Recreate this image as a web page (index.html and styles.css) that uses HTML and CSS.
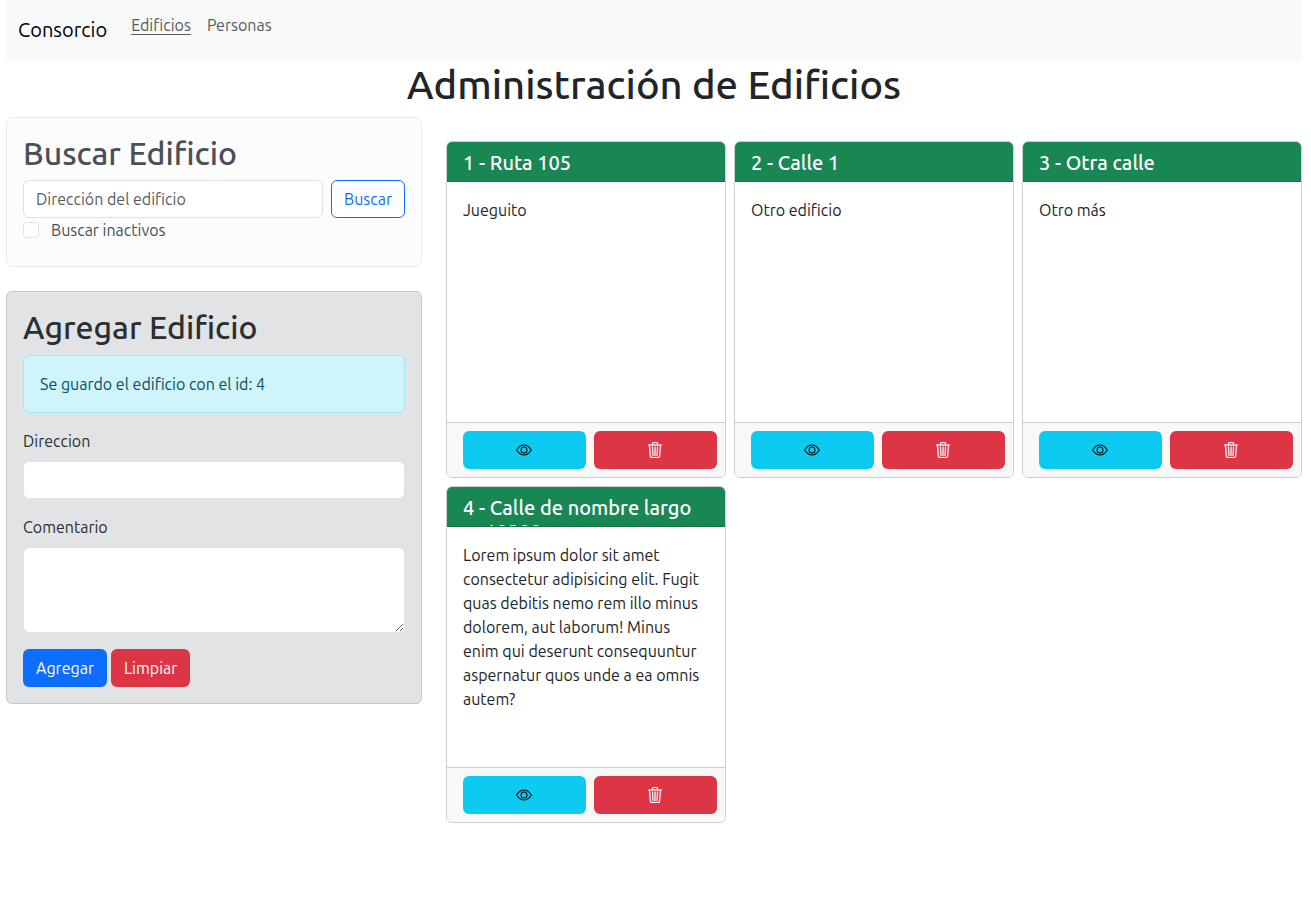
FILE: index.html
```html
<!DOCTYPE html>
<html lang="es">
<head>
<meta charset="utf-8">
<meta name="viewport" content="width=device-width, initial-scale=1">
<title>Consorcio</title>
<link rel="stylesheet" href="styles.css">
</head>
<body>
<svg class="sprite" aria-hidden="true">
  <symbol id="eye" viewBox="0 0 16 16">
    <path d="M16 8s-3-5.500-8-5.500S0 8 0 8s3 5.500 8 5.500S16 8 16 8M1.173 8a13 13 0 0 1 1.660-2.043C4.120 4.668 5.880 3.500 8 3.500s3.879 1.168 5.168 2.457A13 13 0 0 1 14.828 8q-.086.130-.195.288c-.335.480-.830 1.120-1.465 1.755C11.879 11.332 10.119 12.500 8 12.500s-3.879-1.168-5.168-2.457A13 13 0 0 1 1.172 8z"/>
    <path d="M8 5.500a2.500 2.500 0 1 0 0 5 2.500 2.500 0 0 0 0-5M4.500 8a3.500 3.500 0 1 1 7 0 3.500 3.500 0 0 1-7 0"/>
  </symbol>
  <symbol id="trash" viewBox="0 0 16 16">
    <path stroke="currentColor" stroke-width=".25" d="M6.500 1h3a.5.5 0 0 1 .5.5v1H6v-1a.5.5 0 0 1 .5-.5M11 2.500v-1A1.500 1.500 0 0 0 9.500 0h-3A1.500 1.500 0 0 0 5 1.500v1H1.500a.5.5 0 0 0 0 1h.538l.853 10.660A2 2 0 0 0 4.885 16h6.230a2 2 0 0 0 1.994-1.840l.853-10.660h.538a.5.5 0 0 0 0-1zm1.958 1-.846 10.580a1 1 0 0 1-.997.920h-6.230a1 1 0 0 1-.997-.920L3.042 3.500zm-7.487 1a.5.5 0 0 1 .528.470l.5 8.500a.5.5 0 0 1-.998.060L5 5.030a.5.5 0 0 1 .470-.530zm5.058 0a.5.5 0 0 1 .470.530l-.5 8.500a.5.5 0 1 1-.998-.060l.5-8.500a.5.5 0 0 1 .528-.470M8 4.500a.5.5 0 0 1 .5.5v8.500a.5.5 0 0 1-1 0V5a.5.5 0 0 1 .5-.5"/>
  </symbol>
</svg>

<header class="navbar">
  <a class="brand" href="#">Consorcio</a>
  <nav class="nav">
    <a class="nav-link active" href="#">Edificios</a>
    <a class="nav-link" href="#">Personas</a>
  </nav>
</header>

<h1 class="page-title">Administración de Edificios</h1>

<main class="layout">
  <aside class="side">
    <form class="panel search">
      <h2 class="panel-title">Buscar Edificio</h2>
      <div class="search-row">
        <input class="field" type="text" placeholder="Dirección del edificio" aria-label="Dirección del edificio">
        <button class="btn outline" type="button">Buscar</button>
      </div>
      <div class="check">
        <input class="check-box" type="checkbox" id="inactivos">
        <label for="inactivos">Buscar inactivos</label>
      </div>
    </form>

    <form class="panel add">
      <h2 class="panel-title">Agregar Edificio</h2>
      <div class="alert" role="alert">Se guardo el edificio con el id: 4</div>
      <label class="label" for="direccion">Direccion</label>
      <input class="field" type="text" id="direccion">
      <label class="label" for="comentario">Comentario</label>
      <textarea class="field area" id="comentario"></textarea>
      <div class="actions">
        <button class="btn primary" type="button">Agregar</button>
        <button class="btn danger" type="button">Limpiar</button>
      </div>
    </form>
  </aside>

  <section class="cards">
    <article class="card">
      <h3 class="card-head">1 - Ruta 105</h3>
      <p class="card-body">Jueguito</p>
      <div class="card-foot">
        <button class="btn info" type="button" aria-label="Ver"><svg class="icon"><use href="#eye"/></svg></button>
        <button class="btn danger" type="button" aria-label="Eliminar"><svg class="icon"><use href="#trash"/></svg></button>
      </div>
    </article>
    <article class="card">
      <h3 class="card-head">2 - Calle 1</h3>
      <p class="card-body">Otro edificio</p>
      <div class="card-foot">
        <button class="btn info" type="button" aria-label="Ver"><svg class="icon"><use href="#eye"/></svg></button>
        <button class="btn danger" type="button" aria-label="Eliminar"><svg class="icon"><use href="#trash"/></svg></button>
      </div>
    </article>
    <article class="card">
      <h3 class="card-head">3 - Otra calle</h3>
      <p class="card-body">Otro más</p>
      <div class="card-foot">
        <button class="btn info" type="button" aria-label="Ver"><svg class="icon"><use href="#eye"/></svg></button>
        <button class="btn danger" type="button" aria-label="Eliminar"><svg class="icon"><use href="#trash"/></svg></button>
      </div>
    </article>
    <article class="card">
      <h3 class="card-head">4 - Calle de nombre largo cr 10200</h3>
      <p class="card-body">Lorem ipsum dolor sit amet consectetur adipisicing elit. Fugit quas debitis nemo rem illo minus dolorem, aut laborum! Minus enim qui deserunt consequuntur aspernatur quos unde a ea omnis autem?</p>
      <div class="card-foot">
        <button class="btn info" type="button" aria-label="Ver"><svg class="icon"><use href="#eye"/></svg></button>
        <button class="btn danger" type="button" aria-label="Eliminar"><svg class="icon"><use href="#trash"/></svg></button>
      </div>
    </article>
  </section>
</main>
</body>
</html>
```
FILE: styles.css
```css
*, *::before, *::after { box-sizing: border-box; }

body {
  margin: 0;
  padding: 0 9px 0 6px;
  background: #fff;
  color: #212529;
  font-family: Ubuntu, "Noto Sans", "Open Sans", sans-serif;
  font-size: 16px;
  line-height: 24px;
}

h1, h2, h3, p { margin: 0; font-weight: 550; }

.sprite { display: none; }
.icon { width: 16px; height: 16px; margin-right: 1px; fill: currentColor; }

.navbar {
  display: flex;
  align-items: center;
  gap: 24px;
  padding: 7px 12px 9px;
  min-height: 61px;
  background: #f8f9fa;
}
.brand { color: #000; font-size: 20px; line-height: 30px; text-decoration: none; }
.nav { display: flex; gap: 16px; padding-bottom: 9px; }
.nav-link { color: #595a5b; text-decoration: none; }
.nav-link.active { text-decoration: underline; text-underline-offset: 3px; }

.page-title { font-size: 40px; line-height: 48px; text-align: center; margin-bottom: 8px; }

.layout {
  display: grid;
  grid-template-columns: repeat(12, minmax(0, 1fr));
  column-gap: 24px;
  align-items: start;
}
.side { grid-column: span 4; display: grid; gap: 24px; }

.panel { padding: 16px; border: 1px solid; border-radius: 6px; }
.panel-title { font-size: 32px; line-height: 38px; margin-bottom: 8px; }
.search { background: #fcfcfd; border-color: #e9eaeb; color: #495057; padding-bottom: 24px; }
.add { background: #e2e3e5; border-color: #c4c8cb; color: #2b2f32; }
.add .panel-title { margin-bottom: 9px; }

.field {
  display: block;
  width: 100%;
  min-width: 0;
  height: 38px;
  padding: 6px 12px;
  border: 1px solid #dee2e6;
  border-radius: 6px;
  background: #fff;
  color: #212529;
  font: inherit;
}
.field::placeholder { color: #595c5f; opacity: 1; }
.area { height: 86px; resize: vertical; }
.label { display: block; margin: 16px 0 8px; }

.search-row { display: flex; gap: 8px; }
.check { display: flex; align-items: center; gap: 12px; }
.check-box {
  appearance: none;
  width: 16px;
  height: 16px;
  margin: 0;
  border: 1px solid #dee2e6;
  border-radius: 4px;
  background: #fff;
}
.check-box:checked { background: #0d6efd; border-color: #0d6efd; }

.alert {
  padding: 16px;
  border: 1px solid #9eeaf9;
  border-radius: 6px;
  background: #cff4fc;
  color: #055160;
}
.actions { display: flex; gap: 4px; margin-top: 16px; }

.btn {
  display: inline-flex;
  align-items: center;
  justify-content: center;
  height: 38px;
  padding: 0 12px;
  border: 1px solid transparent;
  border-radius: 6px;
  font: inherit;
  cursor: pointer;
}
.outline { background: #fff; border-color: #0d6efd; color: #0d6efd; }
.primary { background: #0d6efd; color: #fff; }
.danger { background: #dc3545; color: #fff; }
.info { background: #0dcaf0; color: #000; }

.cards {
  grid-column: span 8;
  display: grid;
  grid-template-columns: repeat(3, minmax(0, 1fr));
  gap: 8px;
  margin-top: 24px;
}
.card { overflow: hidden; border: 1px solid #cdcece; border-radius: 6px; background: #fff; }
.card-head {
  height: 40px;
  padding: 9px 16px 7px;
  overflow: hidden;
  border-bottom: 1px solid #157347;
  background: #198754;
  color: #fff;
  font-size: 20px;
  line-height: 24px;
}
.card-body { height: 240px; padding: 16px; font-weight: 400; overflow: hidden; }
.card-foot {
  display: grid;
  grid-template-columns: 1fr 1fr;
  gap: 8px;
  padding: 8px 8px 8px 16px;
  border-top: 1px solid #cdcece;
  background: #f8f8f8;
}
```
